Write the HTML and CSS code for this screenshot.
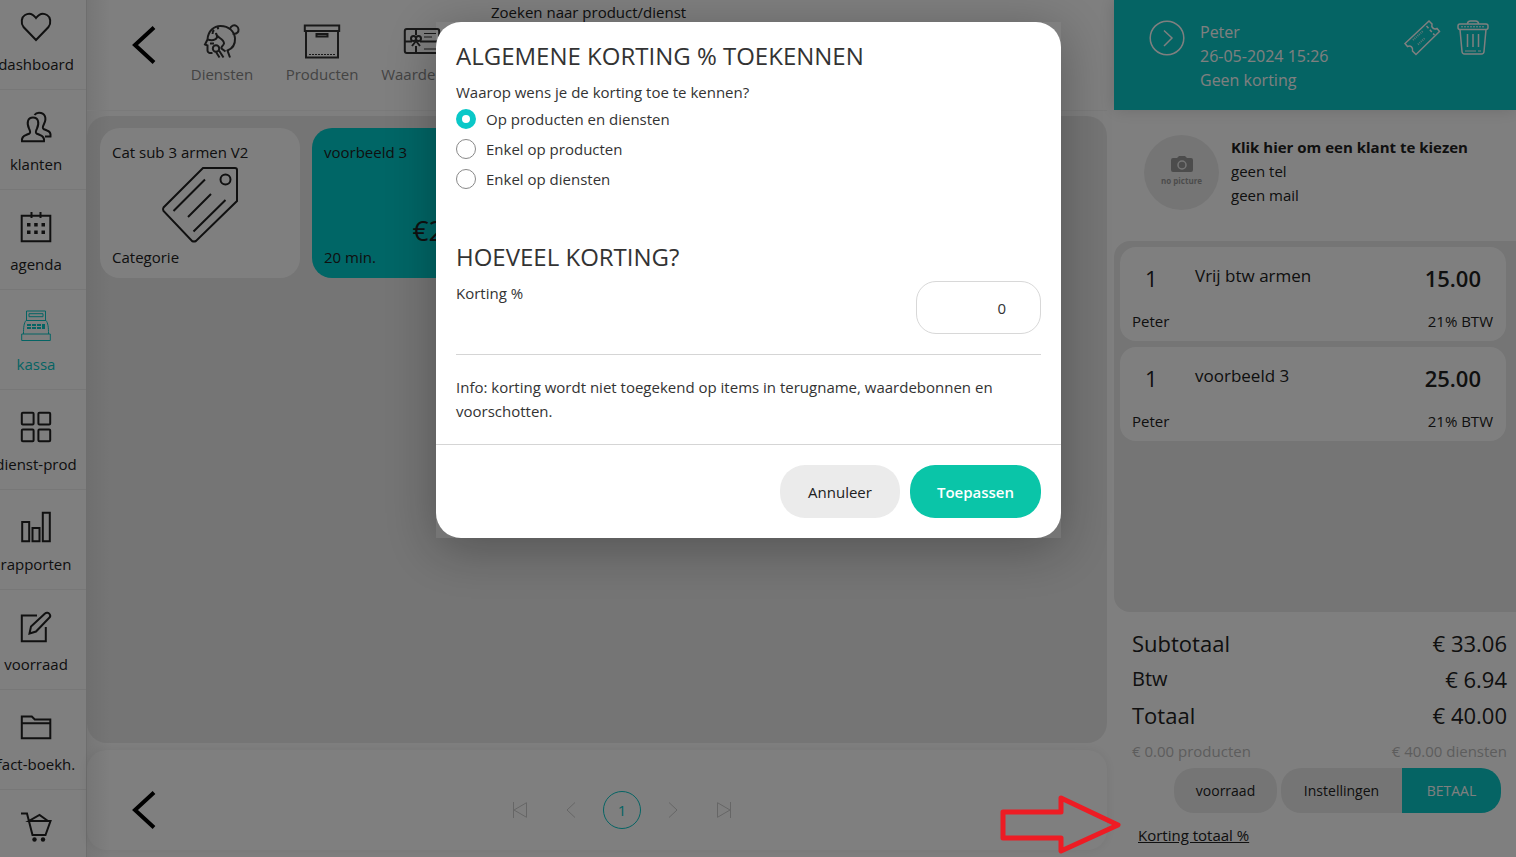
FILE: index.html
```
<!DOCTYPE html>
<html lang="nl">
<head>
    <meta charset="UTF-8">
    <meta name="viewport" content="width=device-width, initial-scale=1.0">
    <title>Kassa</title>
    <link rel="stylesheet" href="styles.css">
</head>
<body>

<div class="app">

    <!-- Menu -->
    <nav class="sidebar">
        <ul>
            <li><a href="#">
                <svg viewBox="0 0 30 30"><path d="M15 28 2.500 15C-.5 11 .5 5 4 3c4-2.500 8-1 11 3 3-4 7-5.500 11-3 3.500 2 4.500 8 1.500 12z"/></svg>
                <span>dashboard</span></a></li>
            <li><a href="#">
                <svg viewBox="0 0 30 30"><path d="M1 29.300c-.5-4 1-5.300 4-6.300l3.500-1.500c1.500-1 .5-3-.5-5-2.500-5.500-1.500-11 4-11s6.500 5.500 4 11c-1 2-2 4-.5 5L19 23c3 1 4.500 2.300 4 6.300z"/><path d="M13.500 3c1-1.500 2.500-2.300 4.500-2.300 6 0 8 5.500 5 11.300-1 2-2 4-.5 5l3.500 1.500c3 1 4 2.500 3.500 6H24"/></svg>
                <span>klanten</span></a></li>
            <li><a href="#">
                <svg viewBox="0 0 30 30"><path d="M.7 3.700h28.600v25.600H.7zM10.500 0v6M19.500 0v6"/><path class="fill" d="M6 11h3.500v3.500H6zM13.200 11h3.500v3.500h-3.500zM20.500 11H24v3.500h-3.500zM6 18.500h3.500V22H6zM13.200 18.500h3.500V22h-3.500zM20.500 18.500H24V22h-3.500z"/></svg>
                <span>agenda</span></a></li>
            <li><a href="#" class="active">
                <svg viewBox="0 0 30 30"><path d="M5.500 8.500V-1h19v9.500M8 1.700h14v3H8zM2.500 22c0-7 .5-11 2.500-13.500h20c2 2.500 2.500 6.500 2.500 13.500M.7 22h28.600v6.500H.7z"/><path class="fill" d="M6 12h4v2H6zM11 12h4v2h-4zM16 12h4v2h-4zM21 12h3v5h-3zM6 15h4v2H6zM11 15h4v2h-4zM16 15h4v2h-4z"/></svg>
                <span>kassa</span></a></li>
            <li><a href="#">
                <svg viewBox="0 0 30 30"><rect x=".8" y=".8" width="11.800" height="11.800" rx="1"/><rect x="17.400" y=".8" width="11.800" height="11.800" rx="1"/><rect x=".8" y="17.400" width="11.800" height="11.800" rx="1"/><rect x="17.400" y="17.400" width="11.800" height="11.800" rx="1"/></svg>
                <span>dienst-prod</span></a></li>
            <li><a href="#">
                <svg viewBox="0 0 30 30"><path d="M1.200 10h7v19.200h-7zM11.500 16h7v13.200h-7zM21.800.8h7v28.400h-7z"/></svg>
                <span>rapporten</span></a></li>
            <li><a href="#">
                <svg viewBox="0 0 30 30"><path d="M16 3.500H.8v25.800h24V15M8.500 21.500l1.500-7L24 1.500c1.500-1.500 3.500-.8 4.500.5s1 2.500 0 3.500L15 19.500z"/></svg>
                <span>voorraad</span></a></li>
            <li><a href="#">
                <svg viewBox="0 0 30 30"><path d="M.8 26V4.500h10l3 3h15.500v18.800H.8zM.8 11.300h28.500"/></svg>
                <span>fact-boekh.</span></a></li>
            <li><a href="#" aria-label="shop">
                <svg viewBox="0 0 30 30"><path d="M0 1.500h6l5.500 21.500h13l5-14H8l10.500-6L27 9"/><circle class="fill" cx="13.500" cy="27.500" r="2.200"/><circle class="fill" cx="22" cy="27.500" r="2.200"/></svg>
            </a></li>
        </ul>
    </nav>

    <!-- Products and services -->
    <main class="main">
        <header class="topbar">
            <button class="back" aria-label="Terug"><svg viewBox="0 0 22 38"><path d="M21 1.500 2 19l19 17.500"/></svg></button>
            <div class="types">
                <a href="#">
                    <svg viewBox="0 0 36 36"><path d="M26 5c1-3.500 4-4.500 6.500-3S35 7 33.500 8.500s-3 1.500-5 1M3.500 15.500C4 7 10 2 16.500 2 25 2 30.500 7.500 31 14.500c.3 6-2.500 10-7.500 12l2.500 7M3.500 15.500 1 20.500l2.500 1v5q0 3 5 2.500M3.500 15.500c7 2 10-1 9.500-3.500l-1-3c0 5 8 5 8 10.500-1 3-3.500 3-2.500 5l4 3M10 6c-1 1-1.500 2.500-1.500 4M13 4.500l2-.5M6 19.500h4"/><circle cx="12" cy="24.500" r="3.200"/><path d="m12 28 3.500 5.500M15 26.500l4.500 7"/></svg>
                    <span>Diensten</span></a>
                <a href="#">
                    <svg viewBox="0 0 36 36"><path d="M.8 1.500h34.400v5.500H.8zM2 7h32v26.500H2zM12.500 10h11v2.500h-11z"/><path class="dots" d="M5 30.500h26"/></svg>
                    <span>Producten</span></a>
                <a href="#">
                    <svg viewBox="0 0 36 36"><rect x=".8" y="5" width="34.400" height="24" rx="2"/><path d="M12 5v6M12 22v7M1 17.500h7M16 17.500h19"/><circle cx="9.500" cy="14.500" r="2.500"/><circle cx="14.500" cy="14.500" r="2.500"/><path d="m12 17-4 5M12 17l4 5"/><path class="thin" d="M20 9.500h12M20 13h8M20 25h12"/></svg>
                    <span>Waardebon</span></a>
            </div>
            <span class="search">Zoeken naar product/dienst</span>
        </header>

        <section class="catalog">
            <a href="#" class="tile">
                <span>Cat sub 3 armen V2</span>
                <svg viewBox="0 0 76 76"><path d="M41 1h32q2 0 2 2v31L34 74q-2 1-4 0L1.500 44q-1-2 0-3.500zM43 12.500 11.500 44M49 27 26 50M63.500 33 31.500 64.500"/><circle cx="63.500" cy="12.500" r="5"/></svg>
                <span>Categorie</span>
            </a>
            <a href="#" class="tile service">
                <span>voorbeeld 3</span>
                <strong>€25.00</strong>
                <span>20 min.</span>
            </a>
        </section>

        <footer class="pagebar">
            <button class="back" aria-label="Terug"><svg viewBox="0 0 22 38"><path d="M21 1.500 2 19l19 17.500"/></svg></button>
            <div class="pager">
                <button aria-label="Eerste"><svg viewBox="0 0 16 16"><path d="M1.500 0v16M14.500.7v14.600L2 8z"/></svg></button>
                <button aria-label="Vorige"><svg viewBox="0 0 16 16"><path d="M12 .5 4 8l8 7.500"/></svg></button>
                <button class="current">1</button>
                <button aria-label="Volgende"><svg viewBox="0 0 16 16"><path d="m4 .5 8 7.500-8 7.500"/></svg></button>
                <button aria-label="Laatste"><svg viewBox="0 0 16 16"><path d="M14.500 0v16M1.500.7v14.600L14 8z"/></svg></button>
            </div>
        </footer>
    </main>

    <!-- Ticket -->
    <aside class="ticket">
        <header class="ticket-head">
            <svg class="next" viewBox="0 0 36 36"><circle cx="18" cy="18" r="16.800"/><path d="m15 10.500 8 7.500-8 8"/></svg>
            <p>Peter<br>26-05-2024 15:26<br>Geen korting</p>
            <button aria-label="Wachtbon">
                <svg viewBox="0 0 36 36"><path d="M25 1 1 23.500l2.500 3c3-1.500 6 1 5 4.500l3.500 3.500 23.500-23-2.500-3c-3 1.500-6-1-5-4.500z"/><path class="dash" d="m22.500 6 8 9"/><path class="print" d="m9 20 10-9M14 24.500l7-6.500"/></svg>
            </button>
            <button aria-label="Verwijderen">
                <svg viewBox="0 0 34 36"><path d="M11.500 4c0-2 1-3 3-3h5c2 0 3 1 3 3M4 9.500l2 22q.3 2.500 2.500 2.500h17q2.200 0 2.500-2.500l2-22M11.500 14v13M17 14v13M22.500 14v13"/><rect x="2" y="4" width="30" height="5.500" rx="2"/><path class="dots" d="M5 6.800h24"/><path class="thin" d="M9 31h11M22 31h3"/></svg>
            </button>
        </header>

        <div class="client">
            <div class="avatar">
                <svg viewBox="0 0 22 16"><path d="M2 2h4l2-2h6l2 2h4q2 0 2 2v10q0 2-2 2H2q-2 0-2-2V4q0-2 2-2z"/><circle cx="11" cy="9" r="4"/></svg>
                <span>no picture</span>
            </div>
            <p><b>Klik hier om een klant te kiezen</b><br>geen tel<br>geen mail</p>
        </div>

        <div class="lines">
            <div class="line">
                <span class="qty">1</span>
                <span class="name">Vrij btw armen</span>
                <b class="price">15.00</b>
                <span class="who">Peter</span>
                <span class="vat">21% BTW</span>
            </div>
            <div class="line">
                <span class="qty">1</span>
                <span class="name">voorbeeld 3</span>
                <b class="price">25.00</b>
                <span class="who">Peter</span>
                <span class="vat">21% BTW</span>
            </div>
        </div>

        <div class="totals">
            <div class="sum"><span>Subtotaal</span><span>€ 33.06</span></div>
            <div class="sum"><span class="small">Btw</span><span>€ 6.94</span></div>
            <div class="sum"><span>Totaal</span><span>€ 40.00</span></div>
            <div class="split"><span>€ 0.00 producten</span><span>€ 40.00 diensten</span></div>
            <div class="actions">
                <button class="stock">voorraad</button>
                <button class="settings">Instellingen</button>
                <button class="pay">BETAAL</button>
            </div>
            <a href="#" class="discount">Korting totaal %</a>
        </div>
    </aside>
</div>

<!-- Discount dialog -->
<div class="backdrop">
    <div class="modal">
        <form class="modal-content">
            <div class="modal-body">
                <h2>ALGEMENE KORTING % TOEKENNEN</h2>
                <p>Waarop wens je de korting toe te kennen?</p>
                <div class="options">
                    <label><input type="radio" name="target" checked> Op producten en diensten</label>
                    <label><input type="radio" name="target"> Enkel op producten</label>
                    <label><input type="radio" name="target"> Enkel op diensten</label>
                </div>
                <h2>HOEVEEL KORTING?</h2>
                <div class="field">
                    <label for="korting">Korting %</label>
                    <input type="text" id="korting" value="0">
                </div>
                <hr>
                <p>Info: korting wordt niet toegekend op items in terugname, waardebonnen en voorschotten.</p>
            </div>
            <div class="modal-footer">
                <button type="button" class="cancel">Annuleer</button>
                <button type="button" class="apply">Toepassen</button>
            </div>
        </form>
    </div>
</div>

<svg class="pointer" viewBox="0 0 122 60"><path d="M3 17h58V3l57 27-57 26V43H3z"/></svg>

</body>
</html>
```
FILE: styles.css
```
* {
    box-sizing: border-box;
}
body {
    margin: 0;
    font-family: "Open Sans", "Noto Sans", sans-serif;
    font-size: 15px;
    line-height: 24px;
    color: #212121;
    background-color: #fff;
}
p, h2, ul {
    margin: 0;
    padding: 0;
    font-weight: 400;
}
a {
    color: inherit;
    text-decoration: none;
}
button, input {
    font: inherit;
    color: inherit;
}
button {
    border: 0;
    padding: 0;
    background: none;
}
svg {
    display: block;
    fill: none;
    stroke: currentColor;
    stroke-width: 1.5;
    overflow: visible;
}
.fill {
    fill: currentColor;
    stroke: none;
}
.thin {
    stroke-width: 1;
}
.dots {
    stroke-width: 1;
    stroke-dasharray: 2 1;
}
.app {
    display: grid;
    grid-template-columns: 87px 1fr 402px;
    height: 100vh;
    overflow: hidden;
}

/* menu */
.sidebar {
    overflow: hidden;
    border-right: 1px solid #ddd;
}
.sidebar ul {
    list-style: none;
    margin: -10px 0 0 -14px;
}
.sidebar li {
    height: 100px;
    border-bottom: 1px solid #eee;
}
.sidebar a {
    display: flex;
    flex-direction: column;
    align-items: center;
    gap: 10px;
    width: 100px;
    padding-top: 22px;
    white-space: nowrap;
}
.sidebar svg {
    width: 30px;
    height: 30px;
    stroke-width: 2;
}
.sidebar .active {
    color: #0ac8c8;
}
.sidebar .active svg {
    stroke-width: 1;
}

/* catalog */
.main {
    display: flex;
    flex-direction: column;
    min-width: 0;
    padding: 0 7px 7px 0;
    background: linear-gradient(to right, #ececec, #fff 24px);
}
.topbar {
    display: flex;
    align-items: flex-start;
    height: 111px;
    padding-left: 46px;
    border-bottom: 1px solid #f5f5f5;
}
.back svg {
    width: 22px;
    height: 38px;
    color: #000;
    stroke-width: 4;
}
.topbar .back {
    margin-top: 26px;
}
.types {
    display: flex;
    margin-left: 17px;
}
.types a {
    display: flex;
    flex-direction: column;
    align-items: center;
    width: 100px;
    padding-top: 24px;
    gap: 2px;
    color: #888;
}
.types svg {
    width: 36px;
    height: 36px;
    color: #333;
    stroke-width: 2;
}
.search {
    margin-left: 19px;
}
.catalog {
    flex: 1;
    display: flex;
    align-items: flex-start;
    gap: 12px;
    margin: 5px 0 7px;
    padding: 12px 13px;
    border-radius: 20px;
    background: linear-gradient(to right, #dedede, #ebebeb 24px);
}
.tile {
    display: flex;
    flex-direction: column;
    justify-content: space-between;
    width: 200px;
    height: 150px;
    padding: 12px 12px 9px;
    border-radius: 20px;
    background-color: #fff;
}
.tile svg {
    width: 76px;
    height: 76px;
    align-self: center;
    stroke-width: 2;
}
.service {
    background-color: #00cccc;
}
.service strong {
    margin-top: 50px;
    font-size: 28px;
    font-weight: 400;
    align-self: flex-end;
}
.pagebar {
    display: grid;
    grid-template-columns: 50px 1fr;
    align-items: center;
    height: 100px;
    padding: 20px 46px 0;
    border-radius: 20px;
    box-shadow: 0 0 12px rgba(0, 0, 0, 0.08);
}
.pager {
    display: flex;
    justify-content: center;
    gap: 13px;
}
.pager button {
    display: grid;
    place-items: center;
    width: 38px;
    height: 38px;
    color: #ccc;
}
.pager svg {
    width: 16px;
    height: 16px;
    stroke-width: 1;
}
.pager .current {
    border: 1px solid #0ac8c8;
    border-radius: 50%;
    color: #0ac8c8;
}

/* ticket */
.ticket {
    display: flex;
    flex-direction: column;
}
.ticket-head {
    display: flex;
    align-items: flex-start;
    gap: 15px;
    height: 110px;
    padding: 20px 25px 0 35px;
    background-color: #0ac8c8;
    color: #fff;
    box-shadow: 0 0 16px rgba(0, 0, 0, 0.15);
}
.ticket-head p {
    flex: 1;
    font-size: 16px;
}
.ticket-head svg {
    width: 36px;
    height: 36px;
}
.dash {
    stroke-dasharray: 3 2;
}
.print {
    stroke-width: 2;
    stroke-dasharray: 1 1;
    opacity: 0.7;
}
.client {
    display: flex;
    gap: 12px;
    height: 131px;
    padding: 25px 30px 0;
}
.avatar {
    display: flex;
    flex-direction: column;
    align-items: center;
    justify-content: center;
    width: 75px;
    height: 75px;
    border-radius: 50%;
    background-color: #ebebeb;
    color: #999;
    font-size: 8px;
    font-weight: 700;
    line-height: 18px;
}
.avatar svg {
    width: 22px;
    height: 16px;
    fill: currentColor;
    stroke: none;
}
.avatar circle {
    stroke: #ebebeb;
    stroke-width: 1.5;
}
.lines {
    flex: 1;
    display: flex;
    flex-direction: column;
    gap: 6px;
    padding: 6px 10px 6px 6px;
    border-radius: 16px 0 0 16px;
    background-color: #ebebeb;
}
.line {
    display: grid;
    grid-template-columns: 63px 1fr auto;
    grid-template-rows: 39px 24px;
    row-gap: 6px;
    height: 94px;
    padding: 17px 13px 0 12px;
    border-radius: 16px;
    background-color: #fff;
}
.qty {
    padding-left: 13px;
    font-size: 22px;
    line-height: 28px;
}
.name {
    font-size: 17px;
    line-height: 24px;
}
.price {
    padding-right: 12px;
    font-size: 22px;
    font-weight: 600;
    line-height: 28px;
}
.who {
    grid-column: 1 / 3;
}
.vat {
    text-align: right;
}
.totals {
    height: 245px;
    padding: 13px 9px 0 18px;
}
.sum {
    display: flex;
    justify-content: space-between;
    font-size: 22px;
    line-height: 36px;
}
.sum .small {
    font-size: 20px;
}
.split {
    display: flex;
    justify-content: space-between;
    margin-top: 6px;
    color: #bbb;
}
.actions {
    display: flex;
    justify-content: flex-end;
    margin: 5px 6px 10px 0;
    font-size: 14px;
}
.actions button {
    height: 45px;
    background-color: #ebebeb;
}
.actions .stock {
    width: 103px;
    margin-right: 4px;
    border-radius: 20px;
}
.actions .settings {
    width: 121px;
    border-radius: 20px 0 0 20px;
}
.actions .pay {
    width: 99px;
    border-radius: 0 20px 20px 0;
    background-color: #0ac8c8;
    color: #fff;
}
.discount {
    margin-left: 6px;
    text-decoration: underline;
}

/* dialog */
.backdrop {
    position: fixed;
    inset: 0;
    display: flex;
    justify-content: center;
    align-items: flex-start;
    padding: 22px 19px 0 0;
    background-color: rgba(0, 0, 0, 0.5);
}
.modal {
    width: 625px;
    box-shadow: 0 10px 50px rgba(0, 0, 0, 0.3);
}
.modal-content {
    border-radius: 25px;
    background-color: #fff;
    color: #333;
}
.modal-body {
    padding: 19px 20px 21px;
}
.modal h2 {
    margin-bottom: 10px;
    font-size: 24px;
    line-height: 29px;
}
.options {
    margin-bottom: 48px;
}
.options label {
    display: flex;
    align-items: center;
    gap: 10px;
    height: 30px;
}
.options input {
    appearance: none;
    width: 20px;
    height: 20px;
    margin: 0;
    border: 1px solid #888;
    border-radius: 50%;
}
.options input:checked {
    border: 6px solid #0ac8c8;
}
.field {
    display: flex;
    justify-content: space-between;
}
.field input {
    width: 125px;
    height: 53px;
    padding: 0 34px;
    border: 1px solid #d8d8d8;
    border-radius: 20px;
    text-align: right;
}
.modal hr {
    margin: 20px 0;
    border: 0;
    border-top: 1px solid #d5d5d5;
}
.modal-footer {
    display: flex;
    justify-content: flex-end;
    gap: 10px;
    padding: 20px;
    border-top: 1px solid #d5d5d5;
}
.modal-footer button {
    height: 53px;
    border-radius: 25px;
}
.cancel {
    width: 120px;
    background-color: #ebebeb;
    color: #212121;
}
.modal-footer .apply {
    width: 131px;
    background-color: #0ac5a8;
    color: #fff;
    font-weight: 600;
}

/* arrow lies over the backdrop */
.pointer {
    position: fixed;
    right: 394px;
    bottom: 2px;
    width: 122px;
    height: 60px;
    color: #ed1c24;
    stroke-width: 5;
    stroke-linejoin: round;
}
```
